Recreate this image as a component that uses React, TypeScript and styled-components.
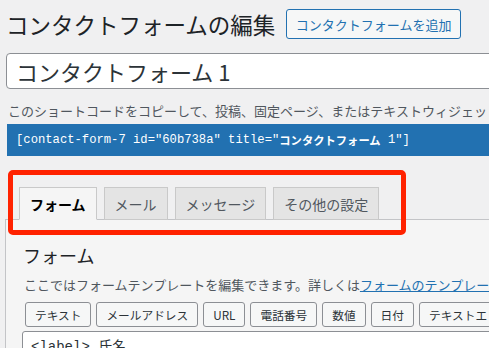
import styled, { createGlobalStyle } from "styled-components";

const GlobalStyle = createGlobalStyle`
  html, body {
    margin: 0;
    background: #f0f0f1;
    overflow: hidden;
  }
  body {
    font-family: "Noto Sans CJK JP", "Noto Sans", sans-serif;
    color: #1d2327;
  }
`;

const Wrap = styled.div`
  width: 760px;
  padding: 9px 0 0 6px;
  box-sizing: border-box;
`;

const HeaderRow = styled.div`
  display: flex;
  align-items: center;
  height: 30px;
`;

const PageTitle = styled.h1`
  margin: 0;
  font-size: 22.5px;
  font-weight: 400;
  line-height: 30px;
  color: #1d2327;
`;

const AddButton = styled.button`
  margin-left: 11px;
  height: 30px;
  padding: 0 8.5px;
  border: 1px solid #2271b1;
  border-radius: 3px;
  background: #f6f7f7;
  color: #2271b1;
  font-family: inherit;
  font-size: 13px;
`;

const TitleInput = styled.input`
  display: block;
  margin-top: 14px;
  width: 700px;
  height: 36px;
  box-sizing: border-box;
  padding: 0 9px;
  border: 1px solid #8c8f94;
  border-radius: 4px;
  background: #fff;
  color: #2c3338;
  font-family: inherit;
  font-size: 22px;
  outline: none;
`;

const Hint = styled.p`
  margin: 12px 0 0 2px;
  font-size: 13px;
  line-height: 20px;
  color: #50575e;
  white-space: nowrap;
`;

const Shortcode = styled.div`
  margin: 3px 0 0 1px;
  width: 700px;
  height: 32px;
  padding-left: 9px;
  box-sizing: border-box;
  display: flex;
  align-items: center;
  background: #2271b1;
  color: #fff;
  font-family: "Liberation Mono", "Noto Sans CJK JP", monospace;
  font-size: 12.2px;
  white-space: pre;
`;

const ShortcodeJp = styled.span`
  font-family: "Noto Sans CJK JP", sans-serif;
  font-size: 11.3px;
  font-weight: 700;
`;

const TabSection = styled.div`
  position: relative;
  margin: 14px 0 0 -1px;
  padding: 17px 0 0 14px;
  display: flex;
  gap: 7px;
  border-bottom: 1px solid #c3c4c7;
`;

const Tab = styled.div<{ $active?: boolean }>`
  height: 33px;
  padding: 0 10px;
  margin-bottom: -1px;
  box-sizing: border-box;
  display: flex;
  align-items: center;
  border: 1px solid #c9c9c9;
  border-bottom: ${(p) => (p.$active ? "1px solid #f5f5f5" : "1px solid #c9c9c9")};
  background: ${(p) => (p.$active ? "#f5f5f5" : "#e4e4e4")};
  color: ${(p) => (p.$active ? "#000" : "#50575e")};
  font-size: 14px;
  font-weight: ${(p) => (p.$active ? 700 : 400)};
`;

const Highlight = styled.div`
  position: absolute;
  left: 3px;
  top: 0;
  width: 398px;
  height: 65px;
  box-sizing: border-box;
  border: 5px solid #ff2200;
  border-radius: 5px;
  pointer-events: none;
`;

const Panel = styled.div`
  margin-left: -1px;
  padding: 23px 0 0 17px;
  height: 200px;
  border-left: 1px solid #c3c4c7;
  background: #f5f5f5;
`;

const PanelTitle = styled.h2`
  margin: 0;
  font-size: 18px;
  font-weight: 400;
  line-height: 24px;
  color: #1d2327;
`;

const PanelText = styled.p`
  margin: 8px 0 0 1px;
  font-size: 13px;
  line-height: 20px;
  color: #50575e;
  white-space: nowrap;

  a {
    color: #2271b1;
    text-decoration: underline;
  }
`;

const TagBar = styled.div`
  margin: 7px 0 0 2px;
  display: flex;
  gap: 5px;
`;

const TagButton = styled.button`
  height: 25px;
  padding: 0 9px;
  border: 1px solid #8c8f94;
  border-radius: 3px;
  background: #f6f7f7;
  color: #2c3338;
  font-family: inherit;
  font-size: 11.7px;
  white-space: nowrap;
`;

const Editor = styled.div`
  margin: 4px 0 0 -1px;
  height: 80px;
  padding: 5px 8px;
  border: 1px solid #8c8f94;
  border-radius: 3px;
  background: #fff;
  font-family: "Liberation Mono", "Noto Sans CJK JP", monospace;
  font-size: 14px;
  line-height: 20px;
  color: #2c3338;
`;

const tags = ["テキスト", "メールアドレス", "URL", "電話番号", "数値", "日付", "テキストエリア"];

export default function App() {
  return (
    <>
      <GlobalStyle />
      <Wrap>
        <HeaderRow>
          <PageTitle>コンタクトフォームの編集</PageTitle>
          <AddButton>コンタクトフォームを追加</AddButton>
        </HeaderRow>
        <TitleInput defaultValue="コンタクトフォーム 1" />
        <Hint>このショートコードをコピーして、投稿、固定ページ、またはテキストウィジェットの内容にペーストしてください:</Hint>
        <Shortcode>
          [contact-form-7 id="60b738a" title="<ShortcodeJp>コンタクトフォーム</ShortcodeJp> 1"]
        </Shortcode>
        <TabSection>
          <Tab $active>フォーム</Tab>
          <Tab>メール</Tab>
          <Tab>メッセージ</Tab>
          <Tab>その他の設定</Tab>
          <Highlight />
        </TabSection>
        <Panel>
          <PanelTitle>フォーム</PanelTitle>
          <PanelText>
            ここではフォームテンプレートを編集できます。詳しくは<a href="#">フォームのテンプレートの編集</a>をご覧ください。
          </PanelText>
          <TagBar>
            {tags.map((t) => (
              <TagButton key={t}>{t}</TagButton>
            ))}
          </TagBar>
          <Editor>&lt;label&gt; 氏名</Editor>
        </Panel>
      </Wrap>
    </>
  );
}
